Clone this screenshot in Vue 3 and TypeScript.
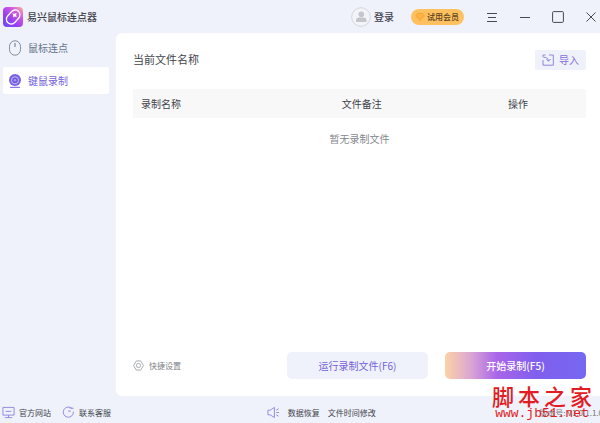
<script setup lang="ts">
import { ref } from 'vue'

interface RecordFile {
  name: string
  note: string
}

const columns: string[] = ['录制名称', '文件备注', '操作']
const files = ref<RecordFile[]>([])
const active = ref<'click' | 'record'>('record')
const watermark: string[] = ['脚', '本', '之', '家']
</script>

<template>
  <div class="app">
    <header class="titlebar">
      <svg class="logo" viewBox="0 0 20 20" aria-hidden="true">
        <defs>
          <linearGradient id="logoFill" x1="1" y1="0" x2="0.1" y2="1">
            <stop offset="0" stop-color="#ffb795" />
            <stop offset="0.3" stop-color="#d45be0" />
            <stop offset="0.65" stop-color="#9a3fee" />
            <stop offset="1" stop-color="#6a4cf5" />
          </linearGradient>
        </defs>
        <rect width="20" height="20" rx="4" fill="url(#logoFill)" />
        <rect x="5.4" y="2.2" width="9.6" height="15.600" rx="4.8" transform="rotate(42 10.2 10)" fill="none" stroke="#fff" stroke-width="1.3" />
        <path d="M9.500 6.200l1.800.6 2.200-.8-.4 2 .6 1.900-1.900-.4-1.700 1 .1-2z" fill="#fff" />
      </svg>
      <h1 class="app-name">易兴鼠标连点器</h1>
      <button class="login" type="button">
        <svg class="avatar" viewBox="0 0 20 20" aria-hidden="true">
          <circle cx="10" cy="10" r="9.3" fill="#f3f4f8" stroke="#d3d6dd" />
          <circle cx="10.3" cy="7.3" r="2.8" fill="#c3c6cc" />
          <path d="M5 15v-1.5q0-3 3-3h4.500q3 0 3 3V15z" fill="#c3c6cc" />
        </svg>
        登录
      </button>
      <button class="vip" type="button">
        <svg class="gem" viewBox="0 0 10 10" aria-hidden="true">
          <path d="M2.500 1.500h5L9.300 4 5 8.800.7 4zM3 4l2 2 2-2" fill="#ffb443" stroke="#f9a02c" stroke-width=".8" stroke-linejoin="round" />
        </svg>
        试用会员
      </button>
      <nav class="window-tools" aria-label="窗口">
        <button type="button" aria-label="菜单">
          <svg viewBox="0 0 12 12"><path d="M1 2.500h10M2 6.500h8M1 10.500h10" /></svg>
        </button>
        <button type="button" aria-label="最小化">
          <svg viewBox="0 0 12 12"><path d="M1 6.500h10" /></svg>
        </button>
        <button type="button" aria-label="最大化">
          <svg viewBox="0 0 12 12"><rect x=".6" y=".6" width="10.800" height="10.800" rx="1" /></svg>
        </button>
        <button type="button" aria-label="关闭">
          <svg viewBox="0 0 12 12"><path d="M1.500 1.500l9 9M10.500 1.500l-9 9" /></svg>
        </button>
      </nav>
    </header>

    <div class="body">
      <nav class="sidebar">
        <button type="button" class="nav-item" :class="{ active: active === 'click' }" @click="active = 'click'">
          <svg viewBox="0 0 14 16" aria-hidden="true">
            <rect x="1.500" y=".8" width="11" height="14.400" rx="5.500" fill="none" stroke="#848d9b" />
            <path d="M7 3v4" stroke="#848d9b" stroke-width="1.300" />
          </svg>
          鼠标连点
        </button>
        <button type="button" class="nav-item" :class="{ active: active === 'record' }" @click="active = 'record'">
          <svg viewBox="0 0 14 16" aria-hidden="true">
            <circle cx="7" cy="7" r="6" fill="#7a62e8" />
            <circle cx="7" cy="7.300" r="3.500" fill="#6f58dd" stroke="#c9bffa" />
            <circle cx="7" cy="7.300" r="1.300" fill="#a598f2" />
            <path d="M2.500 14.300h9" stroke="#8b79e8" stroke-width="1.200" stroke-linecap="round" />
          </svg>
          键鼠录制
        </button>
      </nav>

      <main class="panel">
        <div class="panel-head">
          <h2>当前文件名称</h2>
          <button class="import" type="button">
            <svg viewBox="0 0 12 12" aria-hidden="true">
              <path d="M3.500 1H1v2M1 6v5.200h10.300V1H7M1.500 3.500q4-1 5 3.500M4.500 5.500L6.600 7.200l2-2.200" />
            </svg>
            导入
          </button>
        </div>

        <table>
          <thead>
            <tr>
              <th v-for="column in columns" :key="column" scope="col">{{ column }}</th>
            </tr>
          </thead>
          <tbody>
            <tr v-for="file in files" :key="file.name">
              <td>{{ file.name }}</td>
              <td>{{ file.note }}</td>
              <td></td>
            </tr>
            <tr v-if="files.length === 0">
              <td class="empty" colspan="3">暂无录制文件</td>
            </tr>
          </tbody>
        </table>

        <div class="actions">
          <button class="quick" type="button">
            <svg viewBox="0 0 12 12" aria-hidden="true">
              <path d="M3.600 1h4.800L11.400 6l-3 5H3.600L.6 6z" stroke-linejoin="round" />
              <circle cx="6" cy="6" r="2.300" />
            </svg>
            快捷设置
          </button>
          <button class="action run" type="button">运行录制文件(F6)</button>
          <button class="action start" type="button">开始录制(F5)</button>
        </div>
      </main>
    </div>

    <footer class="statusbar">
      <a class="site" href="#site">
        <svg viewBox="0 0 14 14" aria-hidden="true">
          <path d="M1 1.500h12v8.300H1zM4 5.800h6M7 9.800v2.500M3 12.500h8" />
        </svg>
        官方网站
      </a>
      <a class="service" href="#service">
        <svg viewBox="0 0 14 14" aria-hidden="true">
          <path d="M11 3A5.500 5.500 0 1 0 12.300 6M6.500 5.500h3M8 2l4.500.5" />
        </svg>
        联系客服
      </a>
      <div class="news">
        <svg viewBox="0 0 14 14" aria-hidden="true">
          <path d="M1 4.500h2.500L8 1.500v11L3.500 9.500H1zM10 4.500l2.500-1.500M10 7h3M10 9.500l2.500 1.500" />
        </svg>
        <a href="#recovery">数据恢复</a>
        <a href="#filetime">文件时间修改</a>
      </div>
      <span class="version">版本号: V1.0.1.1.0</span>
    </footer>

    <div class="watermark">
      <div class="mark-name"><span v-for="char in watermark" :key="char">{{ char }}</span></div>
      <div class="mark-url">www.jb51.net</div>
    </div>
  </div>
</template>

<style>
body {
  margin: 0;
}
</style>

<style scoped>
.app {
  position: relative;
  display: flex;
  flex-direction: column;
  min-height: 100vh;
  overflow: hidden;
  background: #eff2fb;
  color: #3f434b;
  font-family: "Noto Sans CJK SC", sans-serif;
  font-size: 10px;
  line-height: 16px;
}

button {
  display: flex;
  align-items: center;
  margin: 0;
  padding: 0;
  border: 0;
  background: none;
  color: inherit;
  font: inherit;
  white-space: nowrap;
  cursor: pointer;
}

svg {
  display: block;
  flex: none;
}

a {
  color: inherit;
  text-decoration: none;
}

.titlebar {
  display: flex;
  align-items: center;
  height: 33px;
  padding: 0 3px;
}

.logo {
  width: 20px;
  height: 20px;
}

.app-name {
  flex: 1;
  margin: 0 0 0 4px;
  font-size: 10px;
  font-weight: 500;
}

.login {
  gap: 3px;
  font-weight: 500;
}

.avatar {
  width: 20px;
  height: 20px;
}

.vip {
  gap: 2px;
  height: 16px;
  margin-left: 17px;
  padding: 0 5px 0 4px;
  border-radius: 8px;
  background: #ffc15f;
  color: #5c4120;
  font-size: 8px;
  font-weight: 500;
}

.gem {
  width: 10px;
  height: 10px;
}

.window-tools {
  display: flex;
  gap: 21px;
  margin-left: 22px;
}

.window-tools svg {
  width: 12px;
  height: 12px;
  fill: none;
  stroke: #454951;
}

.body {
  display: flex;
  flex: 1;
}

.sidebar {
  display: flex;
  flex-direction: column;
  gap: 6px;
  box-sizing: border-box;
  width: 116px;
  padding: 1px 7px 0 3px;
}

.nav-item {
  gap: 6px;
  height: 27px;
  padding: 0 5px;
  border-radius: 2px;
  color: #66758b;
}

.nav-item svg {
  width: 14px;
  height: 16px;
}

.nav-item.active {
  background: #fff;
  color: #7562dc;
}

.panel {
  display: flex;
  flex: 1;
  flex-direction: column;
  padding: 17px 14px 17px 17px;
  border-radius: 6px 0 0 6px;
  background: #fff;
}

.panel-head {
  display: flex;
  align-items: flex-start;
  justify-content: space-between;
  margin-bottom: 19px;
}

h2 {
  margin: 0;
  font-size: 11px;
  font-weight: 400;
  line-height: 18px;
}

.import {
  gap: 5px;
  height: 20px;
  padding: 0 7px;
  border-radius: 2px;
  background: #f0f2fb;
  color: #7f6fe0;
}

.import svg {
  width: 12px;
  height: 12px;
  fill: none;
  stroke: #9286dc;
}

table {
  width: 100%;
  border-collapse: collapse;
  table-layout: fixed;
}

th {
  height: 29px;
  padding: 0;
  background: #f8f8f9;
  font-weight: 400;
}

th:nth-child(1) {
  width: 31%;
  padding-left: 8px;
  box-sizing: border-box;
  text-align: left;
}

th:nth-child(2) {
  width: 39%;
}

th:nth-child(3) {
  width: 30%;
}

.empty {
  height: 42px;
  padding: 0;
  color: #85888e;
  text-align: center;
}

.actions {
  display: flex;
  align-items: center;
  gap: 17px;
  margin-top: auto;
}

.quick {
  flex: 1;
  gap: 5px;
  color: #808389;
  font-size: 8px;
}

.quick svg {
  width: 11px;
  height: 11px;
  fill: none;
  stroke: #a3a5aa;
}

.action {
  justify-content: center;
  width: 141px;
  height: 27px;
  border-radius: 5px;
}

.run {
  background: #f0f2fb;
  color: #7562dc;
}

.start {
  background: linear-gradient(90deg, #fbd3a6 0%, #dca6d2 18%, #a965ea 37%, #805fee 65%, #7668f1 100%);
  color: #fff;
  font-weight: 500;
}

.statusbar {
  display: flex;
  align-items: center;
  height: 27px;
  padding: 6px 0 0 2px;
  box-sizing: border-box;
  overflow: hidden;
  font-size: 8px;
  white-space: nowrap;
}

.statusbar svg {
  width: 13px;
  height: 13px;
  fill: none;
  stroke: #9185df;
}

.site,
.service {
  display: flex;
  align-items: center;
  gap: 4px;
}

.service {
  margin-left: 11px;
}

.news {
  display: flex;
  flex: 1;
  align-items: center;
  justify-content: center;
  gap: 8px;
  padding-right: 8px;
}

.version {
  margin-right: -3px;
  color: #6f7278;
}

.watermark {
  position: absolute;
  right: 8px;
  bottom: 2px;
  color: #e31b22;
  pointer-events: none;
}

.mark-name {
  display: flex;
  gap: 4px;
  font-size: 22px;
  font-weight: 500;
  line-height: 24px;
}

.mark-url {
  font-family: "Liberation Mono", monospace;
  font-size: 13px;
  line-height: 14px;
  text-align: center;
}
</style>
